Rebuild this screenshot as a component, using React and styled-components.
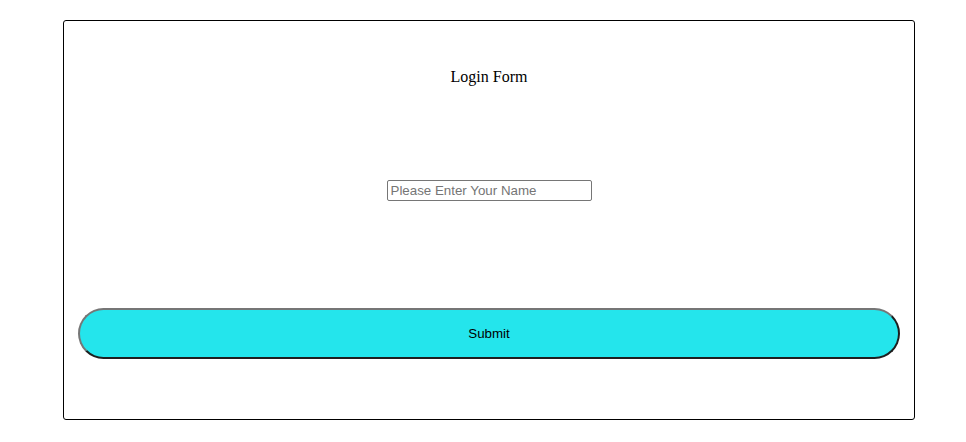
import React from 'react'
import styled, { createGlobalStyle } from 'styled-components'

const Global = createGlobalStyle`
body {
  margin: 8px;
  background-color: #ffffff;
  font-family: "Liberation Serif", "Times New Roman", serif;
}
`

const App = () => {
  return (
    <>
      <Global />
      <Card>
        <Title>Login Form</Title>
        <NameInput type="text" placeholder="Please Enter Your Name" />
        <SubmitButton type="button">Submit</SubmitButton>
      </Card>
    </>
  )
}

export default App

const Card = styled.div`
box-sizing: border-box;
width: 852px;
height: 400px;
margin: 12px 0 0 55px;
padding: 47px 14px 60px 14px;
border: 1px solid #000000;
border-radius: 3px;
display: flex;
flex-direction: column;
align-items: center;
`

const Title = styled.div`
font-family: "Liberation Serif", "Times New Roman", serif;
font-size: 16px;
line-height: 18px;
color: #000000;
`

const NameInput = styled.input`
box-sizing: border-box;
width: 205px;
height: 21px;
margin-top: 94px;
padding: 1px 3px;
border: 1px solid #767676;
border-radius: 2px;
font-family: "Liberation Sans", Arial, sans-serif;
font-size: 13.33px;
color: #000000;
outline: none;
&::placeholder {
  color: #757575;
}
`

const SubmitButton = styled.button`
box-sizing: border-box;
width: 100%;
height: 51px;
margin-top: 107px;
border-width: 2px;
border-style: solid;
border-color: #767676 #1e1e1e #1e1e1e #767676;
border-radius: 26px;
background-color: #24e5ec;
font-family: "Liberation Sans", Arial, sans-serif;
font-size: 13.33px;
color: #000000;
cursor: pointer;
`
